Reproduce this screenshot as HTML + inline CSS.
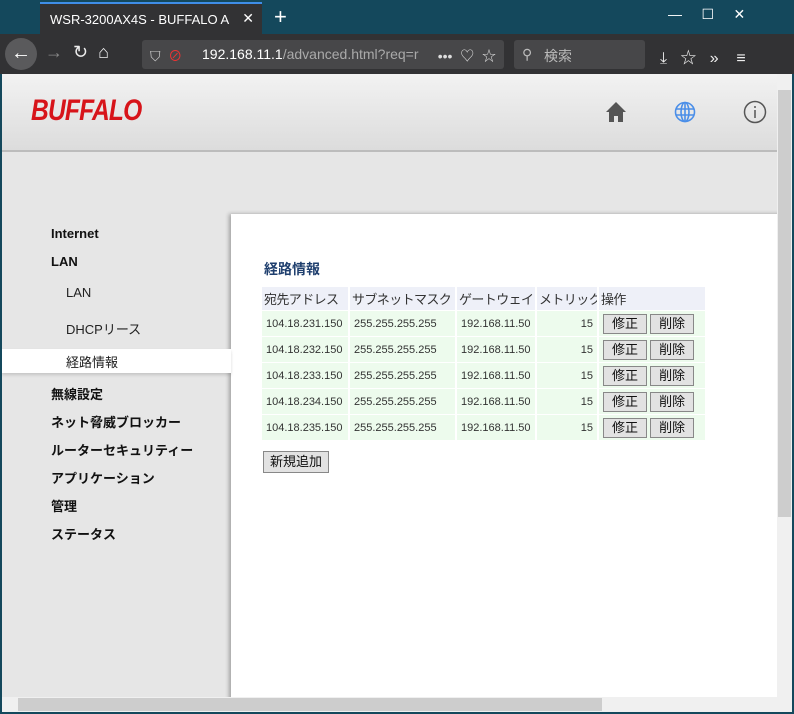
<!DOCTYPE html>
<html><head><meta charset="utf-8"><style>
*{margin:0;padding:0;box-sizing:border-box}
body{width:794px;height:714px;overflow:hidden;background:#14485c;font-family:"Liberation Sans","Noto Sans CJK JP",sans-serif;position:relative}
.abs{position:absolute}
#tab{left:40px;top:2px;width:222px;height:32px;background:#323234;border-top:2px solid #3f8ee8;color:#fff;font-size:13px}
#tabt{position:absolute;left:10px;top:8px;width:180px;white-space:nowrap;overflow:hidden}
#bar{left:0;top:34px;width:794px;height:40px;background:#323234}
#url{left:142px;top:40px;width:362px;height:29px;background:#474749;border-radius:3px;color:#fff;font-size:14px;padding:6px 0 0 60px;white-space:nowrap}
#srch{left:514px;top:40px;width:131px;height:29px;background:#474749;border-radius:3px;color:#bbb;font-size:14px;padding:6px 0 0 30px}
#page{left:2px;top:74px;width:775px;height:623px;background:#e6e6e6;overflow:hidden}
#hdr{left:0;top:0;width:775px;height:78px;background:linear-gradient(#f2f2f2,#dcdcdc);border-bottom:2px solid #bcbcbc}
#logo{left:29px;top:20px;font:italic bold 30px "Liberation Sans",sans-serif;color:#d7141a;letter-spacing:-1px;transform:scaleX(0.82);transform-origin:left}
#panel{left:229px;top:140px;width:560px;height:500px;background:#fff;box-shadow:-2px 0 4px rgba(0,0,0,.3)}
.nav{position:absolute;left:49px;font-size:13px;font-weight:bold;color:#111}
.sub{position:absolute;left:64px;font-size:13px;color:#222}
table{border-collapse:separate;border-spacing:2px 0;position:absolute;left:258px;top:213px;font-size:11px;color:#333;table-layout:fixed;width:445px}
th,td{white-space:nowrap;overflow:hidden}
th{background:#eef0f8;font-weight:normal;font-size:13px;letter-spacing:-0.6px;text-align:left;height:23px;padding:0 2px;color:#333}
td{background:#edfbed;height:26px;padding:0 4px;border-top:1px solid #fff}
.b{display:inline-block;border:1px solid #888;background:#e2e2e2;font-size:13px;padding:0 8px;line-height:18px;color:#111}
</style></head><body>
<div id="tab" class="abs"><div id="tabt">WSR-3200AX4S - BUFFALO AirStation</div><span style="position:absolute;right:8px;top:6px;font-size:14px">✕</span></div>
<div class="abs" style="left:274px;top:4px;color:#fff;font-size:22px">+</div>
<div class="abs" style="left:668px;top:6px;color:#fff;font-size:14px;letter-spacing:0">—&nbsp;&nbsp;&nbsp;&nbsp;&nbsp;☐&nbsp;&nbsp;&nbsp;&nbsp;&nbsp;✕</div>
<div id="bar" class="abs"></div>
<div class="abs" style="left:5px;top:38px;width:32px;height:32px;border-radius:50%;background:#5a5a5c;color:#fff;font-size:20px;text-align:center;line-height:30px">←</div>
<div class="abs" style="left:45px;top:42px;color:#888;font-size:18px">→&nbsp;&nbsp;<span style="color:#eee">↻&nbsp;&nbsp;⌂</span></div>
<div id="url" class="abs">192.168.11.1<span style="color:#aaa">/advanced.html?req=r</span><span style="position:absolute;left:8px;color:#ccc">⛉&nbsp;&nbsp;<span style="color:#e33">⊘</span></span><span style="position:absolute;right:8px;color:#ddd">•••&nbsp;&nbsp;♡&nbsp;&nbsp;☆</span></div>
<div id="srch" class="abs">検索<span style="position:absolute;left:8px">⚲</span></div>
<div class="abs" style="left:660px;top:44px;color:#eee;font-size:16px">⤓&nbsp;&nbsp;&nbsp;☆&nbsp;&nbsp;&nbsp;»&nbsp;&nbsp;&nbsp;&nbsp;≡</div>
<div id="page" class="abs">
 <div id="hdr" class="abs"><div id="logo" class="abs">BUFFALO</div>
  <svg class="abs" style="left:603px;top:27px" width="22" height="22" viewBox="0 0 22 22"><path d="M11 1L1 11h3v10h5v-6h4v6h5V11h3z" fill="#555"/></svg>
  <svg class="abs" style="left:672px;top:27px" width="22" height="22" viewBox="0 0 22 22" fill="none" stroke="#4a8ee8" stroke-width="1.6"><circle cx="11" cy="11" r="9.5"/><ellipse cx="11" cy="11" rx="4" ry="9.5"/><path d="M2 8h18M2 14h18M11 1.5v19"/></svg>
  <svg class="abs" style="left:741px;top:26px" width="24" height="24" viewBox="0 0 24 24" fill="none" stroke="#555" stroke-width="1.5"><circle cx="12" cy="12" r="10.5"/><path d="M12 10v8M12 6v2"/></svg>
 </div>
 <div id="panel" class="abs"></div>
 <div class="abs" style="left:0;top:275px;width:229px;height:24px;background:#fff;box-shadow:0 2px 3px rgba(0,0,0,.15)"></div>
 <div class="nav" style="top:152px">Internet</div>
 <div class="nav" style="top:180px">LAN</div>
 <div class="sub" style="top:211px">LAN</div>
 <div class="sub" style="top:245px">DHCPリース</div>
 <div class="sub" style="top:278px">経路情報</div>
 <div class="nav" style="top:310px">無線設定</div>
 <div class="nav" style="top:338px">ネット脅威ブロッカー</div>
 <div class="nav" style="top:366px">ルーターセキュリティー</div>
 <div class="nav" style="top:394px">アプリケーション</div>
 <div class="nav" style="top:422px">管理</div>
 <div class="nav" style="top:450px">ステータス</div>
 <div class="abs" style="left:262px;top:185px;font-size:14px;font-weight:bold;color:#1f3f6e">経路情報</div>
 <table>
 <colgroup><col style="width:86px"><col style="width:105px"><col style="width:78px"><col style="width:60px"><col style="width:106px"></colgroup>
 <tr><th>宛先アドレス</th><th>サブネットマスク</th><th>ゲートウェイ</th><th>メトリック</th><th>操作</th></tr>
 <tr><td>104.18.231.150</td><td>255.255.255.255</td><td>192.168.11.50</td><td style="text-align:right">15</td><td><span class="b">修正</span> <span class="b">削除</span></td></tr>
 <tr><td>104.18.232.150</td><td>255.255.255.255</td><td>192.168.11.50</td><td style="text-align:right">15</td><td><span class="b">修正</span> <span class="b">削除</span></td></tr>
 <tr><td>104.18.233.150</td><td>255.255.255.255</td><td>192.168.11.50</td><td style="text-align:right">15</td><td><span class="b">修正</span> <span class="b">削除</span></td></tr>
 <tr><td>104.18.234.150</td><td>255.255.255.255</td><td>192.168.11.50</td><td style="text-align:right">15</td><td><span class="b">修正</span> <span class="b">削除</span></td></tr>
 <tr><td>104.18.235.150</td><td>255.255.255.255</td><td>192.168.11.50</td><td style="text-align:right">15</td><td><span class="b">修正</span> <span class="b">削除</span></td></tr>
 </table>
 <div class="abs b" style="left:261px;top:377px;padding:1px 6px">新規追加</div>
</div>
<div class="abs" style="left:777px;top:74px;width:15px;height:623px;background:#f0f0f0"><div style="position:absolute;left:1px;top:16px;width:13px;height:427px;background:#cdcdcd"></div></div>
<div class="abs" style="left:2px;top:697px;width:775px;height:15px;background:#f0f0f0"><div style="position:absolute;left:16px;top:1px;width:584px;height:13px;background:#cdcdcd"></div></div>
<div class="abs" style="left:777px;top:697px;width:15px;height:15px;background:#f0f0f0"></div>
</body></html>
